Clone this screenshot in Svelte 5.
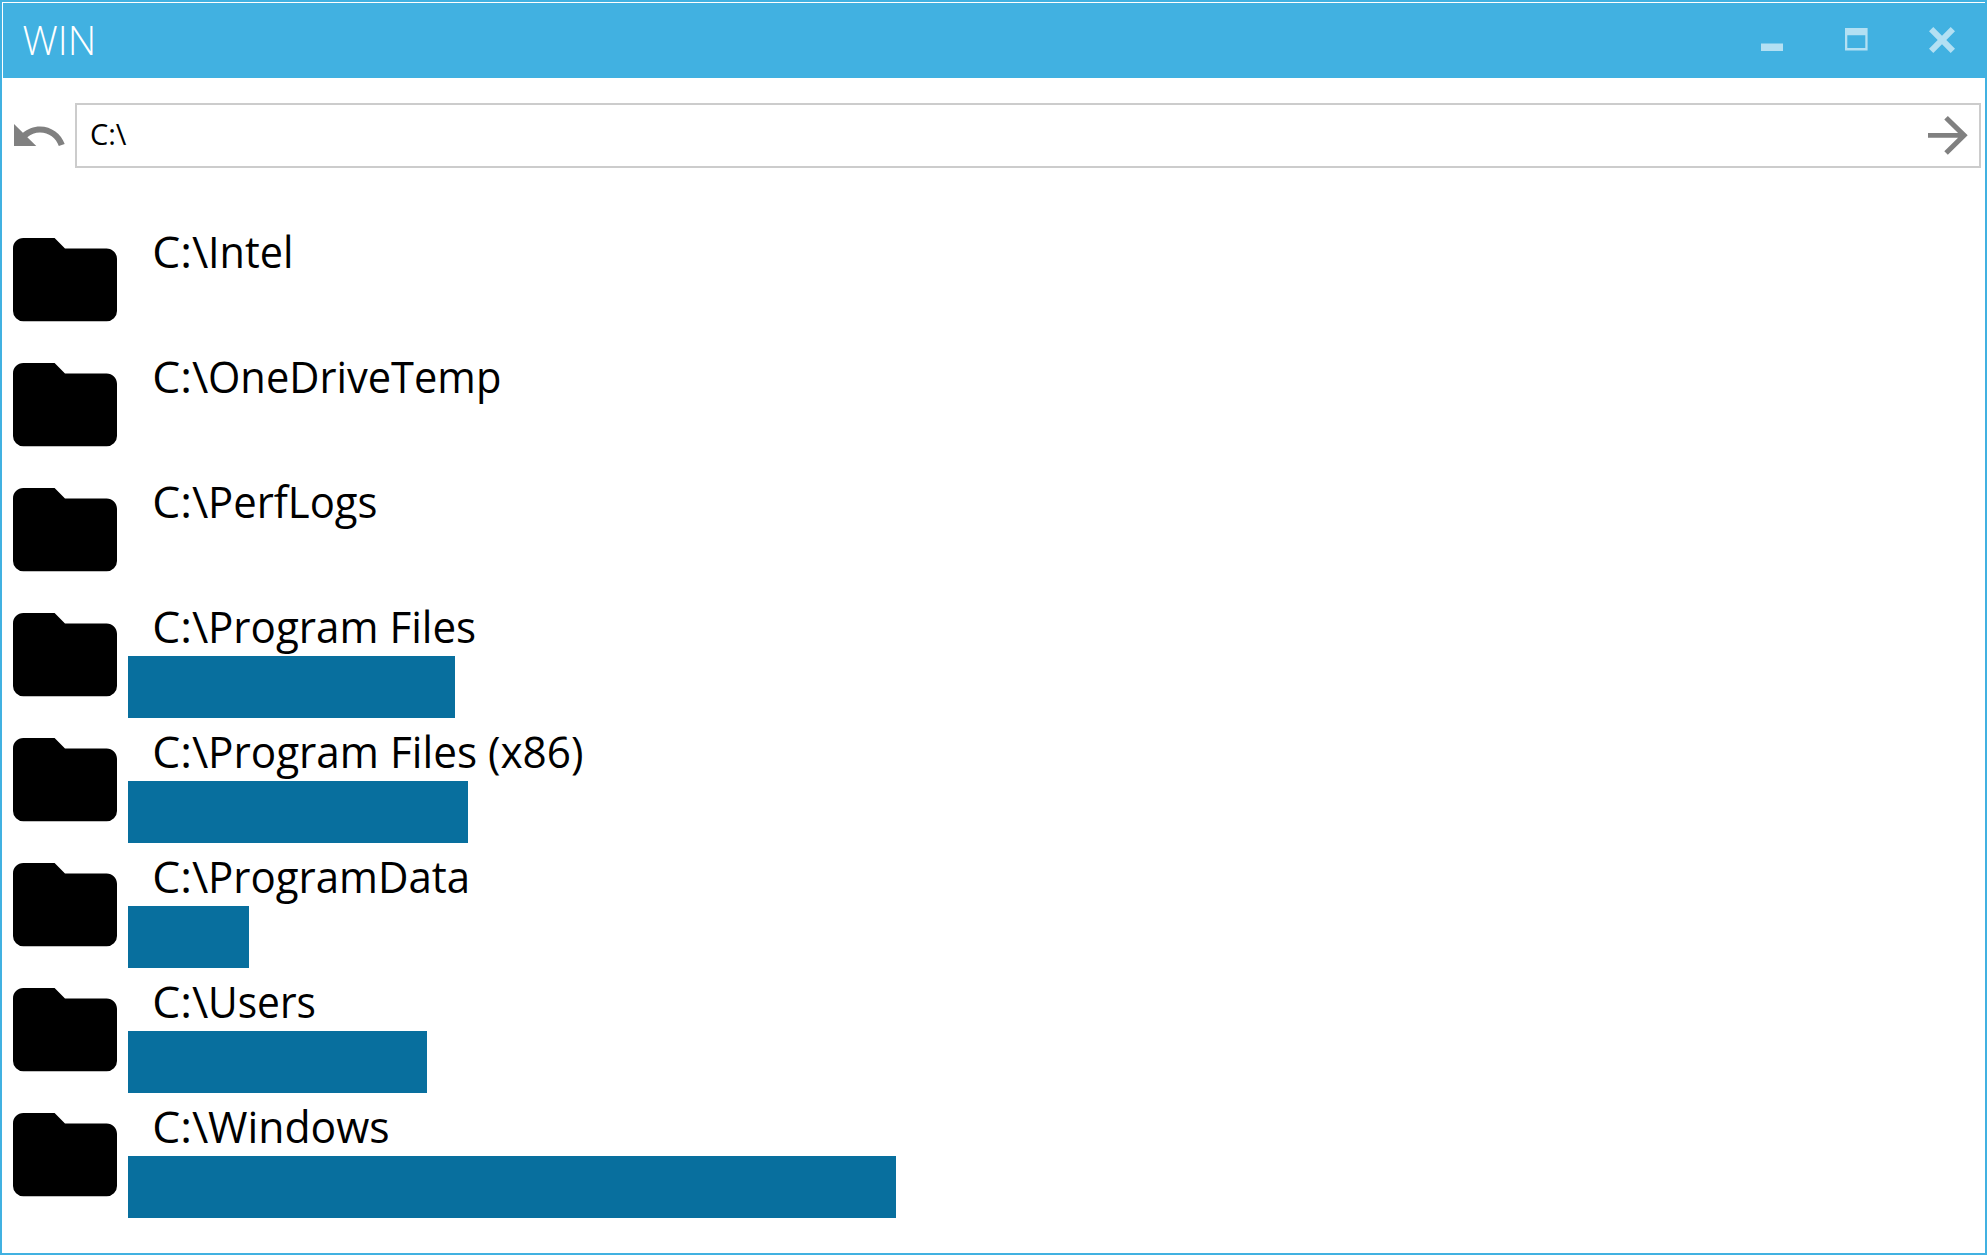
<script>
  // stretch: horizontal condensing applied to each folder name
  const folders = [
    { name: 'Intel', bar: 0, stretch: 0.93 },
    { name: 'OneDriveTemp', bar: 0, stretch: 0.935 },
    { name: 'PerfLogs', bar: 0, stretch: 0.94 },
    { name: 'Program Files', bar: 327, stretch: 0.947 },
    { name: 'Program Files (x86)', bar: 340, stretch: 0.95 },
    { name: 'ProgramData', bar: 121, stretch: 0.944 },
    { name: 'Users', bar: 299, stretch: 0.915 },
    { name: 'Windows', bar: 768, stretch: 0.96 }
  ];
</script>

<main class="window">
  <header class="titlebar">
    <h1>WIN</h1>
    <div class="controls">
      <svg class="min" viewBox="0 0 22 8"><path d="M0 .5H22V8H0Z" /></svg>
      <svg class="max" viewBox="0 0 23 23"><path fill-rule="evenodd" d="M0 0H22.6V22.6H0ZM2.3 7.3V20H20.3V7.3Z" /></svg>
      <svg class="close" viewBox="0 0 26 26"><path d="M4.3 0L13 8.7L21.7 0L26 4.3L17.3 13L26 21.7L21.7 26L13 17.3L4.3 26L0 21.7L8.7 13L0 4.3Z" /></svg>
    </div>
  </header>

  <nav class="toolbar">
    <svg class="undo" viewBox="2 7 20.47 9" preserveAspectRatio="none"><path d="M12.5,8C9.85,8 7.45,9 5.6,10.6L2,7V16H11L7.38,12.38C8.77,11.22 10.54,10.5 12.5,10.5C16.04,10.5 19.05,12.81 20.1,16L22.47,15.22C21.08,11.03 17.15,8 12.5,8Z" /></svg>
    <div class="address">
      <span>C:\</span>
      <svg class="go" viewBox="4 4.08 15.84 15.84" preserveAspectRatio="none"><path d="M4,11V13H16L10.5,18.5L11.92,19.92L19.84,12L11.92,4.08L10.5,5.5L16,11H4Z" /></svg>
    </div>
  </nav>

  <ul class="list">
    {#each folders as f}
      <li>
        <svg class="folder" viewBox="2 4 20 16" preserveAspectRatio="none"><path d="M10,4H4C2.89,4 2,4.89 2,6V18A2,2 0 0,0 4,20H20A2,2 0 0,0 22,18V8C22,6.89 21.1,6 20,6H12L10,4Z" /></svg>
        <div class="info">
          <div class="path">C:\<span class="name" style:transform="scaleX({f.stretch})">{f.name}</span></div>
          {#if f.bar}<div class="bar" style:width="{f.bar}px"></div>{/if}
        </div>
      </li>
    {/each}
  </ul>
</main>

<style>
  :global(body) { margin: 0; background: #fff; }
  .window {
    box-sizing: border-box;
    width: 1987px;
    height: 1255px;
    border: 2px solid #41b1e1;
    background: #fff;
    font-family: "Open Sans", "Noto Sans", sans-serif;
    color: #000;
    overflow: hidden;
  }
  svg { display: block; flex: none; }
  .titlebar {
    box-sizing: border-box;
    height: 76px;
    border-top: 1px solid #fff;
    border-left: 1px solid #fff;
    background: #41b1e1;
    display: flex;
    justify-content: space-between;
  }
  h1 {
    margin: 0;
    padding-left: 19.5px;
    font-size: 39.5px;
    font-weight: 300;
    line-height: 74px;
    color: #fff;
  }
  .controls { display: flex; align-items: flex-start; padding-right: 30px; }
  .controls svg { fill: #b3e0f3; }
  .min { width: 22px; height: 8px; margin: 40px 62px 0 0; }
  .max { width: 23px; height: 23px; margin: 25px 61px 0 0; }
  .close { width: 26px; height: 26px; margin-top: 24px; }
  .toolbar {
    display: flex;
    align-items: center;
    height: 65px;
    padding: 25px 4px 0 12px;
  }
  .undo { width: 50.7px; height: 22px; margin: 0 10.3px 1px 0; fill: #808080; }
  .address {
    box-sizing: border-box;
    flex: 1;
    height: 65px;
    border: 2px solid #ccc;
    display: flex;
    align-items: center;
    justify-content: space-between;
    padding: 0 11px 0 13px;
    font-size: 29px;
    line-height: 58px;
  }
  .address span { height: 61px; }
  .go { width: 39.7px; height: 38.7px; fill: #808080; }
  .list { list-style: none; margin: 0; padding: 50px 0 0 11px; }
  li { display: flex; height: 125px; }
  .folder { width: 104px; height: 83.3px; margin-top: 20.4px; }
  .info { padding-left: 11px; }
  .path {
    height: 63px;
    padding-left: 24.3px;
    font-size: 44.5px;
    line-height: 66px;
    white-space: pre;
  }
  .name { display: inline-block; transform-origin: 0 50%; }
  .bar { height: 62px; background: #086f9e; }
</style>
